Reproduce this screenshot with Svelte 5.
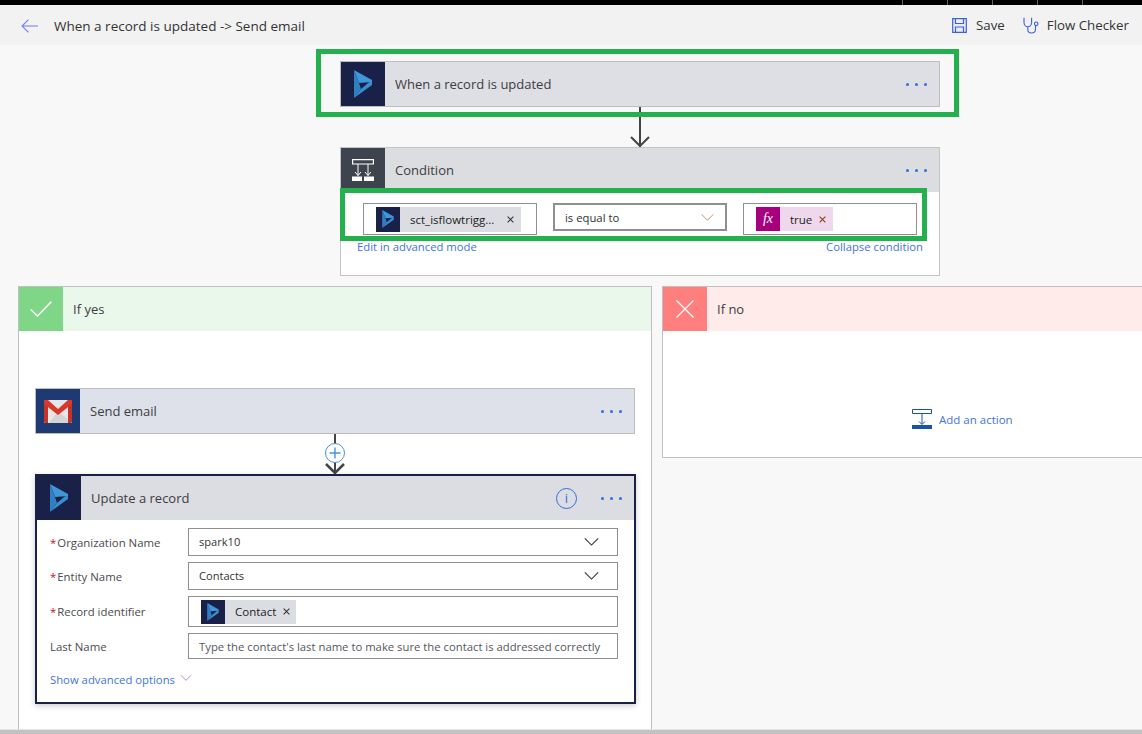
<script>
  const ticks = [0, 1, 2, 3, 4];
  const fields = [
    { label: 'Organization Name', req: true, value: 'spark10', kind: 'select' },
    { label: 'Entity Name', req: true, value: 'Contacts', kind: 'select' },
    { label: 'Record identifier', req: true, value: 'Contact', kind: 'token' },
    { label: 'Last Name', req: false, value: "Type the contact's last name to make sure the contact is addressed correctly", kind: 'hint' }
  ];
</script>

{#snippet dyn(cls)}
  <svg class={cls} viewBox="0 0 18 28" aria-hidden="true">
    <path d="M0 0 L18 10 L18 12 L5 13 Z" fill="#3f96d8" />
    <path d="M0 0 L5 13 L7 19 L0 28 Z" fill="#2f7fc1" />
    <path d="M18 12 L18 15 L0 28 L7 19 L15 12.300 Z" fill="#3a8ed0" />
  </svg>
{/snippet}

{#snippet dots()}
  <span class="dots"><i></i><i></i><i></i></span>
{/snippet}

{#snippet chev(cls)}
  <svg class={cls} viewBox="0 0 16 9" aria-hidden="true"><path d="M.5.5 8 8 15.500.5" fill="none" stroke="currentColor" stroke-width="1.200" /></svg>
{/snippet}

{#snippet x(cls)}
  <svg class={cls} viewBox="0 0 8 8" aria-hidden="true"><path d="M.7.7 7.300 7.300M7.300.7.7 7.300" fill="none" stroke="currentColor" stroke-width="1.200" /></svg>
{/snippet}

<div class="page">
  <div class="topbar">
    {#each ticks as t}<span class="tick"></span>{/each}
  </div>

  <header class="header">
    <svg class="back" viewBox="0 0 17 14" aria-hidden="true"><path d="M17 7H1M7.500.7 1 7l6.500 6.300" fill="none" stroke="#6f7ff5" stroke-width="1.100" /></svg>
    <span class="title">When a record is updated -&gt; Send email</span>
    <span class="spacer"></span>
    <span class="cmd save">
      <svg viewBox="0 0 15 15" aria-hidden="true"><path d="M.7.7H14.300V14.300H.7ZM3.500.7V5.500H11.500V.7M3.500 14.300V9H11.500V14.300" fill="#e9e9f8" stroke="#3d62d8" stroke-width="1.200" /></svg>
      Save
    </span>
    <span class="cmd check">
      <svg viewBox="0 0 17 17" aria-hidden="true"><path d="M1 .7V5.500C1 8.200 3 9.700 4.800 9.700 6.600 9.700 8.600 8.200 8.600 5.500V.7M4.800 9.700V12.500C4.800 14.800 6.500 16 8.400 16 10.500 16 12.500 14.800 12.500 12.200V8.500" fill="none" stroke="#3d62d8" stroke-width="1.100" /><circle cx="13.200" cy="6.800" r="1.800" fill="none" stroke="#3d62d8" stroke-width="1.100" /></svg>
      Flow Checker
    </span>
  </header>

  <main class="canvas">
    <div class="highlight trigger-wrap">
      <div class="card trigger">
        <span class="tile navy">{@render dyn('logo')}</span>
        <span class="card-title">When a record is updated</span>
        {@render dots()}
      </div>
    </div>

    <div class="connector tall">
      <svg class="head" viewBox="0 0 20 11" aria-hidden="true"><path d="M1 1 10 10 19 1" fill="none" stroke="#444" stroke-width="2" /></svg>
    </div>

    <section class="condition">
      <div class="cond-head">
        <span class="tile slate">
          <svg class="cond-icon" viewBox="0 0 22 22" aria-hidden="true">
            <path d="M.6.6H21.400V5H.6Z" fill="none" stroke="#fff" stroke-width="1.200" />
            <path d="M6 5V16.500M16 5V16.500M3 13 6 16.500 9 13M13 13 16 16.500 19 13" fill="none" stroke="#fff" stroke-width="1" />
            <path d="M0 17.500H10V22H0ZM12 17.500H22V22H12Z" fill="#fff" />
          </svg>
        </span>
        <span class="card-title">Condition</span>
        {@render dots()}
      </div>
      <div class="highlight cond-row">
        <div class="cond-field token-field">
          <span class="chip">
            <span class="chip-tile navy">{@render dyn('logo small')}</span>
            <span class="chip-text">sct_isflowtrigg...</span>
            {@render x('chip-x sct-x')}
          </span>
        </div>
        <div class="cond-field op">
          <span>is equal to</span>
          {@render chev('op-chev')}
        </div>
        <div class="cond-field token-field">
          <span class="chip pink">
            <span class="chip-tile fx"><em>fx</em></span>
            <span class="chip-text">true</span>
            {@render x('chip-x pink-x')}
          </span>
        </div>
      </div>
      <div class="cond-links">
        <span class="link">Edit in advanced mode</span>
        <span class="link">Collapse condition</span>
      </div>
    </section>

    <div class="branches">
      <section class="branch yes">
        <div class="branch-head">
          <span class="tile green">
            <svg class="mark" viewBox="0 0 22 16" aria-hidden="true"><path d="M.7 8.500 7.500 15 21.300.7" fill="none" stroke="#fff" stroke-width="1.500" /></svg>
          </span>
          <span class="card-title">If yes</span>
        </div>
        <div class="branch-body">
          <div class="card email">
            <span class="tile gmail-tile">
              <svg class="gmail" viewBox="0 0 28 24" aria-hidden="true">
                <path d="M0 1H28V24H0Z" fill="#e6e6e6" />
                <path d="M5 24 14 12 28 24Z" fill="#d4d4d4" />
                <path d="M0 1H4V24H1.500Q0 24 0 22.500ZM24 1H28V22.500Q28 24 26.500 24H24Z" fill="#c5332b" />
                <path d="M0 1H4L14 10 24 1H28V5L14 16 0 5Z" fill="#d8392f" />
              </svg>
            </span>
            <span class="card-title">Send email</span>
            {@render dots()}
          </div>

          <div class="connector short">
            <span class="plus">
              <svg viewBox="0 0 12 12" aria-hidden="true"><path d="M6 .5V11.500M.5 6H11.500" fill="none" stroke="#4a90e2" stroke-width="1.400" /></svg>
            </span>
            <svg class="head" viewBox="0 0 20 11" aria-hidden="true"><path d="M1 1 10 10 19 1" fill="none" stroke="#444" stroke-width="2.500" /></svg>
          </div>

          <div class="editor">
            <div class="editor-head">
              <span class="tile navy">{@render dyn('logo')}</span>
              <span class="card-title">Update a record</span>
              <span class="info"><b>i</b></span>
              {@render dots()}
            </div>
            <div class="form">
              {#each fields as f}
                <div class="row {f.kind}">
                  <span class="label">{#if f.req}<span class="req">*</span>{/if}{f.label}</span>
                  <div class="input">
                    {#if f.kind === 'token'}
                      <span class="chip record">
                        <span class="chip-tile navy">{@render dyn('logo small')}</span>
                        <span class="chip-text">{f.value}</span>
                        {@render x('chip-x contact-x')}
                      </span>
                    {:else}
                      <span class="val">{f.value}</span>
                      {#if f.kind === 'select'}{@render chev('sel-chev')}{/if}
                    {/if}
                  </div>
                </div>
              {/each}
              <div class="advanced">
                <span class="link">Show advanced options</span>
                {@render chev('adv-chev')}
              </div>
            </div>
          </div>
        </div>
      </section>

      <section class="branch no">
        <div class="branch-head">
          <span class="tile red">
            <svg class="mark cross" viewBox="0 0 18 18" aria-hidden="true"><path d="M.5.5 17.500 17.500M17.500.5.5 17.500" fill="none" stroke="#fff" stroke-width="1.100" /></svg>
          </span>
          <span class="card-title">If no</span>
        </div>
        <div class="add-body">
          <span class="add">
            <svg viewBox="0 0 20 20" aria-hidden="true">
              <path d="M.5.5H19.500V4.500H.5Z" fill="none" stroke="#1a52a8" />
              <path d="M10 5V15M7 12.500 10 15.500 13 12.500" fill="none" stroke="#1a52a8" />
              <path d="M0 16H20V20H0Z" fill="#1a52a8" />
            </svg>
            <span class="link big">Add an action</span>
          </span>
        </div>
      </section>
    </div>
  </main>

  <div class="scrollbar"></div>
</div>

<style>
  :global(body) {
    margin: 0;
    background: #f8f8f8;
  }
  .page {
    width: 1142px;
    height: 734px;
    display: flex;
    flex-direction: column;
    overflow: hidden;
    font-family: "Open Sans", "Noto Sans", sans-serif;
    font-size: 12px;
    color: #333;
  }
  .topbar {
    flex: 0 0 5px;
    background: #000;
    display: flex;
    justify-content: flex-end;
    gap: 44px;
    padding-right: 59px;
  }
  .tick {
    width: 1px;
    background: #666;
  }
  .header {
    flex: 0 0 40px;
    background: #f2f2f2;
    display: flex;
    align-items: center;
    padding: 0 13px 0 21px;
    font-size: 13.500px;
  }
  .back {
    width: 17px;
    height: 14px;
    margin-right: 16px;
    margin-top: 2px;
  }
  .title {
    margin-top: 2px;
  }
  .spacer {
    flex: 1;
  }
  .cmd {
    display: flex;
    align-items: center;
    font-size: 13.300px;
  }
  .save {
    gap: 9px;
    margin-right: 18px;
  }
  .check {
    gap: 7px;
  }
  .save svg {
    width: 15px;
    height: 15px;
  }
  .check svg {
    width: 17px;
    height: 17px;
  }
  .canvas {
    flex: 1;
    min-height: 0;
    display: flex;
    flex-direction: column;
    align-items: flex-start;
  }
  .canvas > * {
    flex-shrink: 0;
  }
  .highlight {
    border: 5px solid #22b14c;
    box-sizing: border-box;
  }
  .trigger-wrap {
    position: relative;
    z-index: 1;
    width: 643px;
    height: 68px;
    margin: 4px 0 0 316px;
    padding: 7px 14px 0 19px;
  }
  .card {
    display: flex;
    align-items: center;
    box-sizing: border-box;
    width: 600px;
    height: 46px;
    border: 1px solid #bdbdbd;
  }
  .trigger {
    background: #dedfe4;
  }
  .email {
    background: #dee1ea;
  }
  .tile {
    flex: 0 0 44px;
    height: 44px;
    display: flex;
    align-items: center;
    justify-content: center;
  }
  .navy {
    background: #1a2148;
  }
  .slate {
    background: #3e444e;
  }
  .green {
    background: #7fd686;
  }
  .red {
    background: #ff7f7f;
  }
  .gmail-tile {
    background: #1f3a72;
  }
  .logo {
    width: 18px;
    height: 28px;
  }
  .logo.small {
    width: 12px;
    height: 18px;
  }
  .gmail {
    width: 28px;
    height: 24px;
  }
  .card-title {
    margin-left: 10px;
    font-size: 13px;
    flex: 1;
    color: #3c3c41;
  }
  .dots {
    display: flex;
    gap: 6px;
    margin-right: 12px;
  }
  .dots i {
    width: 3px;
    height: 3px;
    border-radius: 50%;
    background: #2f6fdc;
  }
  .connector {
    position: relative;
    width: 2px;
    background: #444;
  }
  .connector .head {
    position: absolute;
    left: -9px;
    bottom: 0;
    width: 20px;
    height: 11px;
  }
  .connector.tall {
    height: 40px;
    margin-left: 639px;
    margin-top: -10px;
  }
  .condition {
    box-sizing: border-box;
    width: 600px;
    height: 129px;
    margin-left: 340px;
    border: 1px solid #c4c4c4;
    background: #fff;
    position: relative;
  }
  .cond-head {
    display: flex;
    align-items: center;
    background: #dcdde0;
    height: 44px;
  }
  .cond-icon {
    width: 22px;
    height: 22px;
  }
  .cond-row {
    position: absolute;
    left: -1px;
    top: 40px;
    width: 587px;
    height: 53px;
    display: flex;
    gap: 16px;
    padding: 10px 5px 0 18px;
  }
  .cond-field {
    box-sizing: border-box;
    width: 174px;
    height: 32px;
    border: 1px solid #8f8f8f;
    display: flex;
    align-items: center;
    padding-left: 12px;
  }
  .cond-field.op {
    height: 28px;
    border-width: 2px;
    padding: 0 11px 0 10px;
    justify-content: space-between;
    font-size: 11.300px;
    color: #333;
  }
  .op-chev {
    width: 13px;
    height: 7px;
    color: #b08f60;
  }
  .chip {
    display: flex;
    align-items: center;
    height: 25px;
    background: #dcdde3;
    font-size: 11.500px;
    color: #222;
  }
  .chip.pink {
    background: #f0d8ec;
    height: 24px;
  }
  .chip-tile {
    width: 24px;
    height: 100%;
    display: flex;
    align-items: center;
    justify-content: center;
  }
  .chip-tile.fx {
    background: #a6007f;
    color: #fff;
  }
  .chip-tile em {
    font-family: "Liberation Serif", serif;
    font-size: 14px;
  }
  .chip-text {
    margin-left: 10px;
  }
  .chip-x {
    width: 7px;
    height: 7px;
    margin: 0 7px 0 12px;
    color: #333;
  }
  .sct-x {
    margin: 0 7px 0 13px;
  }
  .contact-x {
    margin: 0 6px 0 7px;
  }
  .pink-x {
    color: #8a3a1a;
    margin-left: 7px;
  }
  .cond-links {
    position: absolute;
    left: 16px;
    right: 16px;
    top: 91px;
    display: flex;
    justify-content: space-between;
  }
  .link {
    color: #3f74d8;
    font-size: 11.300px;
  }
  .link.big {
    font-size: 11.500px;
  }
  .branches {
    display: flex;
    gap: 10px;
    margin: 10px 0 0 18px;
    align-items: flex-start;
  }
  .branch {
    box-sizing: border-box;
    background: #fff;
    border: 1px solid #bfbfbf;
    flex-shrink: 0;
  }
  .branch.yes {
    width: 634px;
    height: 460px;
    border-bottom: 0;
  }
  .branch.no {
    width: 490px;
    height: 172px;
    border-right: 0;
  }
  .branch-head {
    display: flex;
    align-items: center;
    height: 44px;
  }
  .yes .branch-head {
    background: #eaf8ec;
  }
  .no .branch-head {
    background: #ffecea;
  }
  .mark {
    width: 22px;
    height: 16px;
  }
  .mark.cross {
    width: 18px;
    height: 18px;
  }
  .branch-body {
    padding: 57px 0 0 16px;
    display: flex;
    flex-direction: column;
  }
  .connector.short {
    height: 40px;
    margin-left: 299px;
  }
  .plus {
    position: absolute;
    left: -9px;
    top: 9px;
    box-sizing: border-box;
    width: 20px;
    height: 20px;
    border: 1px solid #4a90e2;
    border-radius: 50%;
    background: #fff;
    display: flex;
    align-items: center;
    justify-content: center;
    z-index: 1;
  }
  .plus svg {
    width: 12px;
    height: 12px;
  }
  .editor {
    box-sizing: border-box;
    width: 601px;
    height: 230px;
    border: 2px solid #1a2148;
    background: #fff;
    box-shadow: 0 2px 6px rgba(0, 0, 0, 0.2);
  }
  .editor-head {
    display: flex;
    align-items: center;
    background: #dcdde2;
    height: 44px;
  }
  .info {
    box-sizing: border-box;
    width: 21px;
    height: 21px;
    border: 1px solid #2f6fdc;
    border-radius: 50%;
    color: #2f6fdc;
    display: flex;
    align-items: center;
    justify-content: center;
    margin-right: 24px;
  }
  .info b {
    font-weight: 400;
    font-size: 13px;
  }
  .form {
    padding: 8px 16px 0 13px;
    display: flex;
    flex-direction: column;
    gap: 6px;
  }
  .row {
    display: flex;
    align-items: center;
    height: 28px;
    flex-shrink: 0;
  }
  .row.token {
    height: 31px;
  }
  .row.hint {
    height: 26px;
  }
  .label {
    width: 138px;
    font-size: 11.400px;
    color: #4a4a50;
  }
  .req {
    color: #c8102e;
    margin-right: 1px;
  }
  .input {
    box-sizing: border-box;
    flex: 1;
    height: 100%;
    border: 1px solid #8f8f8f;
    display: flex;
    align-items: center;
    justify-content: space-between;
    padding: 0 18px 0 10px;
    font-size: 11.100px;
  }
  .val {
    margin-top: -2px;
  }
  .token .input {
    padding-left: 12px;
  }
  .hint .input {
    color: #55555e;
    padding-right: 0;
    white-space: nowrap;
    font-size: 11.300px;
  }
  .hint .val {
    margin-top: 0;
  }
  .chip.record {
    height: 24px;
  }
  .sel-chev {
    width: 15px;
    height: 8px;
    color: #333;
  }
  .advanced {
    display: flex;
    align-items: center;
    gap: 5px;
    margin-top: 7px;
  }
  .adv-chev {
    width: 12px;
    height: 6px;
    color: #a070c0;
    margin-top: -4px;
  }
  .add-body {
    height: 126px;
    display: flex;
    align-items: flex-start;
    padding: 0 0 0 249px;
  }
  .add {
    display: flex;
    align-items: center;
    gap: 7px;
    margin-top: 78px;
  }
  .add svg {
    width: 20px;
    height: 20px;
  }
  .scrollbar {
    position: fixed;
    left: 0;
    right: 0;
    bottom: 0;
    height: 5px;
    background: #c2c2c2;
    border-top: 1px solid #e4e4e4;
    box-sizing: border-box;
  }
</style>
